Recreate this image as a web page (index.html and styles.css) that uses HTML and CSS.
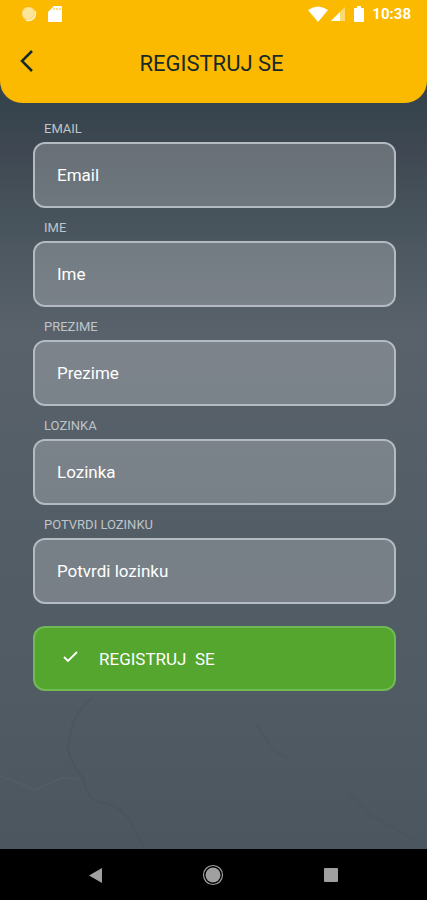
FILE: index.html
```html
<!DOCTYPE html>
<html lang="sr-Latn">
<head>
  <meta charset="UTF-8">
  <meta name="viewport" content="width=device-width, initial-scale=1.0">
  <title>Registruj se</title>
  <link rel="stylesheet" href="styles.css">
</head>
<body>
  <header class="header">
    <div class="status-bar">
      <div class="status-group">
        <svg class="status-icon" viewBox="0 0 16 16" aria-hidden="true">
          <circle cx="8" cy="8" r="7" fill="#fff" opacity="0.35"/>
          <circle cx="7" cy="7" r="6" fill="#fff" opacity="0.4"/>
          <path d="M14 5A7 7 0 0 1 5 14" fill="none" stroke="#fff" stroke-width="1.5" opacity="0.7"/>
        </svg>
        <svg class="status-icon" viewBox="0 0 16 16" aria-hidden="true">
          <path d="M6 0h7a1 1 0 0 1 1 1v14a1 1 0 0 1-1 1H1a1 1 0 0 1-1-1V6z" fill="#fff"/>
          <path d="M6 2v2M9 2v2M12 2v2" stroke="#fbba00" stroke-width="1"/>
        </svg>
      </div>
      <div class="status-group right">
        <svg class="wifi" viewBox="0 0 20 16" aria-hidden="true">
          <path d="M0 4Q10-3 20 4L10 16z" fill="#fff"/>
        </svg>
        <svg class="signal" viewBox="0 0 16 16" aria-hidden="true">
          <path d="M15 1v14H1z" fill="#fff" opacity="0.45"/>
          <path d="M10 6v9H1z" fill="#fff"/>
        </svg>
        <svg class="battery" viewBox="0 0 10 16" aria-hidden="true">
          <path d="M3 0h4v2h2a1 1 0 0 1 1 1v12a1 1 0 0 1-1 1H1a1 1 0 0 1-1-1V3a1 1 0 0 1 1-1h2z" fill="#fff"/>
        </svg>
        <span class="clock">10:38</span>
      </div>
    </div>
    <div class="title-bar">
      <button class="back-btn" type="button" aria-label="Nazad">
        <svg width="14" height="22" viewBox="0 0 14 22" aria-hidden="true">
          <path d="M12 1L2 11L12 21" fill="none" stroke="#17292b" stroke-width="2.5"/>
        </svg>
      </button>
      <h1>REGISTRUJ SE</h1>
    </div>
  </header>

  <main class="content">
    <svg class="map-lines" viewBox="0 0 427 160" aria-hidden="true">
      <path d="M94 8Q70 24 68 60Q72 78 84 90Q86 110 102 114Q124 116 134 140L144 158" stroke="#434e57"/>
      <path d="M0 87Q20 94 34 101Q46 96 62 89L80 90" stroke="#5a6770"/>
      <path d="M256 35L274 62L288 68M348 104L370 126L414 150" stroke="#47525b"/>
    </svg>
    <form class="form">
      <div class="field">
        <label for="email">EMAIL</label>
        <input id="email" type="email" placeholder="Email">
      </div>
      <div class="field">
        <label for="ime">IME</label>
        <input id="ime" type="text" placeholder="Ime">
      </div>
      <div class="field">
        <label for="prezime">PREZIME</label>
        <input id="prezime" type="text" placeholder="Prezime">
      </div>
      <div class="field">
        <label for="lozinka">LOZINKA</label>
        <input id="lozinka" type="password" placeholder="Lozinka">
      </div>
      <div class="field">
        <label for="potvrda">POTVRDI LOZINKU</label>
        <input id="potvrda" type="password" placeholder="Potvrdi lozinku">
      </div>
      <button class="submit-btn" type="button">
        <svg width="16" height="16" viewBox="0 0 16 16" aria-hidden="true">
          <path d="M2 6L6 10L15 1" fill="none" stroke="#fff" stroke-width="1.8"/>
        </svg>
        <span>REGISTRUJ&nbsp; SE</span>
      </button>
    </form>
  </main>

  <nav class="nav-bar">
    <button type="button" aria-label="Nazad">
      <svg width="22" height="22" viewBox="0 0 22 22" aria-hidden="true">
        <path d="M17 4v15L4 11.500z" fill="#a0a0a0"/>
      </svg>
    </button>
    <button type="button" aria-label="Početna">
      <svg width="22" height="22" viewBox="0 0 22 22" aria-hidden="true">
        <circle cx="11" cy="11" r="9.500" fill="none" stroke="#a0a0a0" stroke-width="1.200"/>
        <circle cx="11" cy="11" r="7.500" fill="#a0a0a0"/>
      </svg>
    </button>
    <button type="button" aria-label="Nedavno">
      <svg width="22" height="22" viewBox="0 0 22 22" aria-hidden="true">
        <rect x="4" y="4" width="14" height="14" rx="1" fill="#a0a0a0"/>
      </svg>
    </button>
  </nav>
</body>
</html>
```

FILE: styles.css
```css
* {
  box-sizing: border-box;
}
body {
  margin: 0;
  min-height: 100vh;
  display: flex;
  flex-direction: column;
  font-family: Roboto, 'Liberation Sans', sans-serif;
  background: linear-gradient(#34434c 100px, #3f4852 150px, #47535b 215px, #59626b 330px, #535d66 540px, #515b64 690px, #4c565e 850px);
}
button {
  padding: 0;
  border: none;
  background: none;
  font-family: inherit;
  cursor: pointer;
}
svg {
  display: block;
}

.header {
  background: #fbba00;
  border-radius: 0 0 22px 22px;
  padding-bottom: 10px;
}
.status-bar {
  display: flex;
  justify-content: space-between;
  align-items: center;
  height: 28px;
  padding: 0 16px 0 21px;
}
.status-group {
  display: flex;
  align-items: center;
  gap: 11px;
}
.status-group.right {
  gap: 2px;
}
.status-icon {
  width: 16px;
  height: 16px;
}
.wifi {
  width: 20px;
  height: 16px;
}
.signal {
  width: 16px;
  height: 16px;
}
.battery {
  width: 10px;
  height: 16px;
  margin: 0 6px;
}
.clock {
  color: #fff;
  font-size: 15px;
  font-weight: bold;
}
.title-bar {
  display: grid;
  grid-template-columns: 44px 1fr 48px;
  align-items: center;
  height: 65px;
  padding: 0 4px;
}
.back-btn {
  height: 48px;
  padding-left: 16px;
}
.title-bar h1 {
  margin: 0;
  padding-top: 6px;
  color: #17292b;
  font-size: 22px;
  font-weight: normal;
  line-height: 28px;
  text-align: center;
}

.content {
  position: relative;
  flex: 1;
}
/* faint terrain lines behind the form */
.map-lines {
  position: absolute;
  left: 0;
  bottom: 0;
  width: 100%;
  fill: none;
  stroke-width: 2;
  opacity: 0.3;
}
.form {
  position: relative;
  display: flex;
  flex-direction: column;
  gap: 11px;
  padding: 17px 31px 32px 33px;
}
.field {
  display: flex;
  flex-direction: column;
  gap: 4px;
}
.field label {
  padding-left: 11px;
  color: #bfc5ca;
  font-size: 13px;
  line-height: 18px;
}
.field input {
  width: 100%;
  height: 66px;
  padding: 0 22px;
  border: 2px solid #b3bac1;
  border-radius: 12px;
  background: rgba(255, 255, 255, 0.22);
  background-clip: padding-box;
  color: #fff;
  font-family: inherit;
  font-size: 17px;
  outline: none;
}
.field input::placeholder {
  color: #fff;
  opacity: 1;
}
.submit-btn {
  display: flex;
  align-items: center;
  gap: 21px;
  height: 65px;
  margin-top: 11px;
  padding: 0 27px;
  border: 2px solid #70b955;
  border-radius: 12px;
  background: #55a62e;
  color: #fff;
  font-size: 17px;
}

.nav-bar {
  display: flex;
  justify-content: space-around;
  align-items: center;
  height: 51px;
  padding: 0 37px;
  background: #000;
}
```
